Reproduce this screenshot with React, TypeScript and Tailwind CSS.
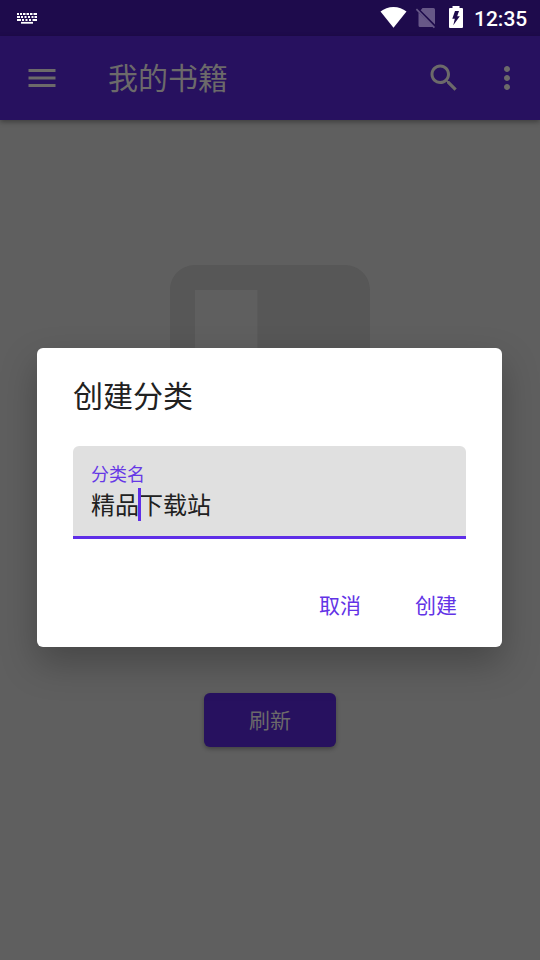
const Toolbar = () => (
  <header className="relative flex h-[84px] shrink-0 items-center bg-[#27115f] pl-6 text-[#6c6a6a] shadow-[0_2px_5px_rgba(0,0,0,0.35)]">
    <button aria-label="Menu">
      <svg className="h-9 w-9" viewBox="0 0 24 24" fill="currentColor">
        <path d="M3 18h18v-2H3v2zm0-5h18v-2H3v2zm0-7v2h18V6H3z" />
      </svg>
    </button>
    <h1 className="mb-[5px] ml-12 flex-1 text-[30px] leading-9">我的书籍</h1>
    <button aria-label="Search" className="mr-[27px]">
      <svg className="h-9 w-9" viewBox="0 0 24 24" fill="currentColor">
        <path d="M15.5 14h-.79l-.28-.27C15.41 12.59 16 11.11 16 9.5 16 5.91 13.09 3 9.5 3S3 5.91 3 9.5 5.91 16 9.5 16c1.61 0 3.09-.59 4.23-1.57l.27.28v.79l5 4.99L20.49 19l-4.99-5zm-6 0C7.01 14 5 11.99 5 9.5S7.01 5 9.5 5 14 7.01 14 9.5 11.99 14 9.5 14z" />
      </svg>
    </button>
    <button aria-label="More" className="mr-[15px]">
      <svg className="h-9 w-9" viewBox="0 0 24 24" fill="currentColor">
        <path d="M12 8c1.1 0 2-.9 2-2s-.9-2-2-2-2 .9-2 2 .9 2 2 2zm0 2c-1.1 0-2 .9-2 2s.9 2 2 2 2-.9 2-2-.9-2-2-2zm0 6c-1.1 0-2 .9-2 2s.9 2 2 2 2-.9 2-2-.9-2-2-2z" />
      </svg>
    </button>
  </header>
);

const StatusBar = () => (
  <div className="flex h-9 shrink-0 items-center bg-[#1e0b4c] pr-3 pl-4 text-white">
    <svg className="h-3 w-[22px]" viewBox="0 0 22 12" stroke="currentColor" fill="none">
      <path strokeWidth="1.8" d="M1 2h2M4 2h2M7 2h2.5M10.5 2h2.5M14 2h2.5M17.5 2h3.5" />
      <path strokeWidth="1.8" d="M1 5h3M5 5h2M8.500 5h2M12 5h2M15.500 5h2M18.500 5h2.500" />
      <path strokeWidth="1.8" d="M1 8h4M6 8h2M9.500 8h2M13 8h2M16.500 8h4.500" />
      <path strokeWidth="1.8" d="M5 10.800h12" />
    </svg>
    <div className="flex-1" />
    <svg className="h-9 w-[90px]" viewBox="0 0 90 36" fill="currentColor">
      {/* wifi */}
      <path d="M.5 11.600C4 8.700 8.500 7 13.500 7s9.500 1.700 13 4.600L13.500 27.800z" />
      {/* no sim */}
      <g fill="#675887">
        <path d="M42.500 8H53.500q1.500 0 1.500 1.500V24.500L40.700 10.300zM38.500 12.500L53.500 26.700q-.3.300-1 .3H40q-1.500 0-1.500-1.500z" />
        <path d="M35.800 9.700l1.200-1.200L55 27 53.800 28.200z" />
      </g>
      {/* charging battery */}
      <path
        fillRule="evenodd"
        d="M72.500 6h7v2h2.500q1 0 1 1v18q0 1-1 1H70q-1 0-1-1V9q0-1 1-1h2.500zM75 11L72.300 18.800h2.500L73.300 25.300 79.800 16.200h-2.600L79 11z"
      />
    </svg>
    <span className="mt-[2px] ml-1 w-[54px] font-[Roboto] text-[21px] leading-9 font-medium">12:35</span>
  </div>
);

const CreateCategoryDialog = () => (
  <div className="absolute top-[348px] left-[37px] flex h-[299px] w-[465px] flex-col rounded-[6px] bg-white px-9 shadow-[0_16px_36px_rgba(0,0,0,0.26)]">
    <h2 className="mt-[28px] text-[30px] leading-9 text-[#212121]">创建分类</h2>
    <div className="mt-[34px] h-[93px] rounded-t-[6px] border-b-[3px] border-[#5f2ee8] bg-[#e0e0e0] px-[18px] pt-[15px]">
      <div className="text-[18px] leading-6 text-[#6638e6]">分类名</div>
      <div className="relative mt-[2px] text-[24px] leading-[33px] text-[#212121]">
        精品下载站
        <span className="absolute top-px left-[47px] h-[33px] w-[3px] bg-[#5f2ee8]" />
      </div>
    </div>
    <div className="mt-[49px] flex justify-end gap-[54px] pr-[9px] text-[21px] leading-8 text-[#6233e6]">
      <button>取消</button>
      <button>创建</button>
    </div>
  </div>
);

export default function App() {
  return (
    <div className="relative flex h-[960px] w-[540px] flex-col overflow-hidden bg-[#5f5f5f] font-['Noto_Sans_CJK_SC',sans-serif]">
      <StatusBar />
      <Toolbar />
      <main className="flex flex-1 flex-col items-center pt-[120px]">
        <svg className="h-[300px] w-[300px]" viewBox="0 0 24 24" fill="#575757">
          <path d="M18 2H6c-1.1 0-2 .9-2 2v16c0 1.1.9 2 2 2h12c1.1 0 2-.9 2-2V4c0-1.1-.9-2-2-2zM6 4h5v8l-2.5-1.5L6 12V4z" />
        </svg>
        <button className="mt-[153px] h-[54px] w-[132px] rounded-[6px] bg-[#27115f] text-[21px] text-[#6c6a6a] shadow-[0_2px_4px_rgba(0,0,0,0.3)]">
          刷新
        </button>
      </main>
      <CreateCategoryDialog />
    </div>
  );
}
